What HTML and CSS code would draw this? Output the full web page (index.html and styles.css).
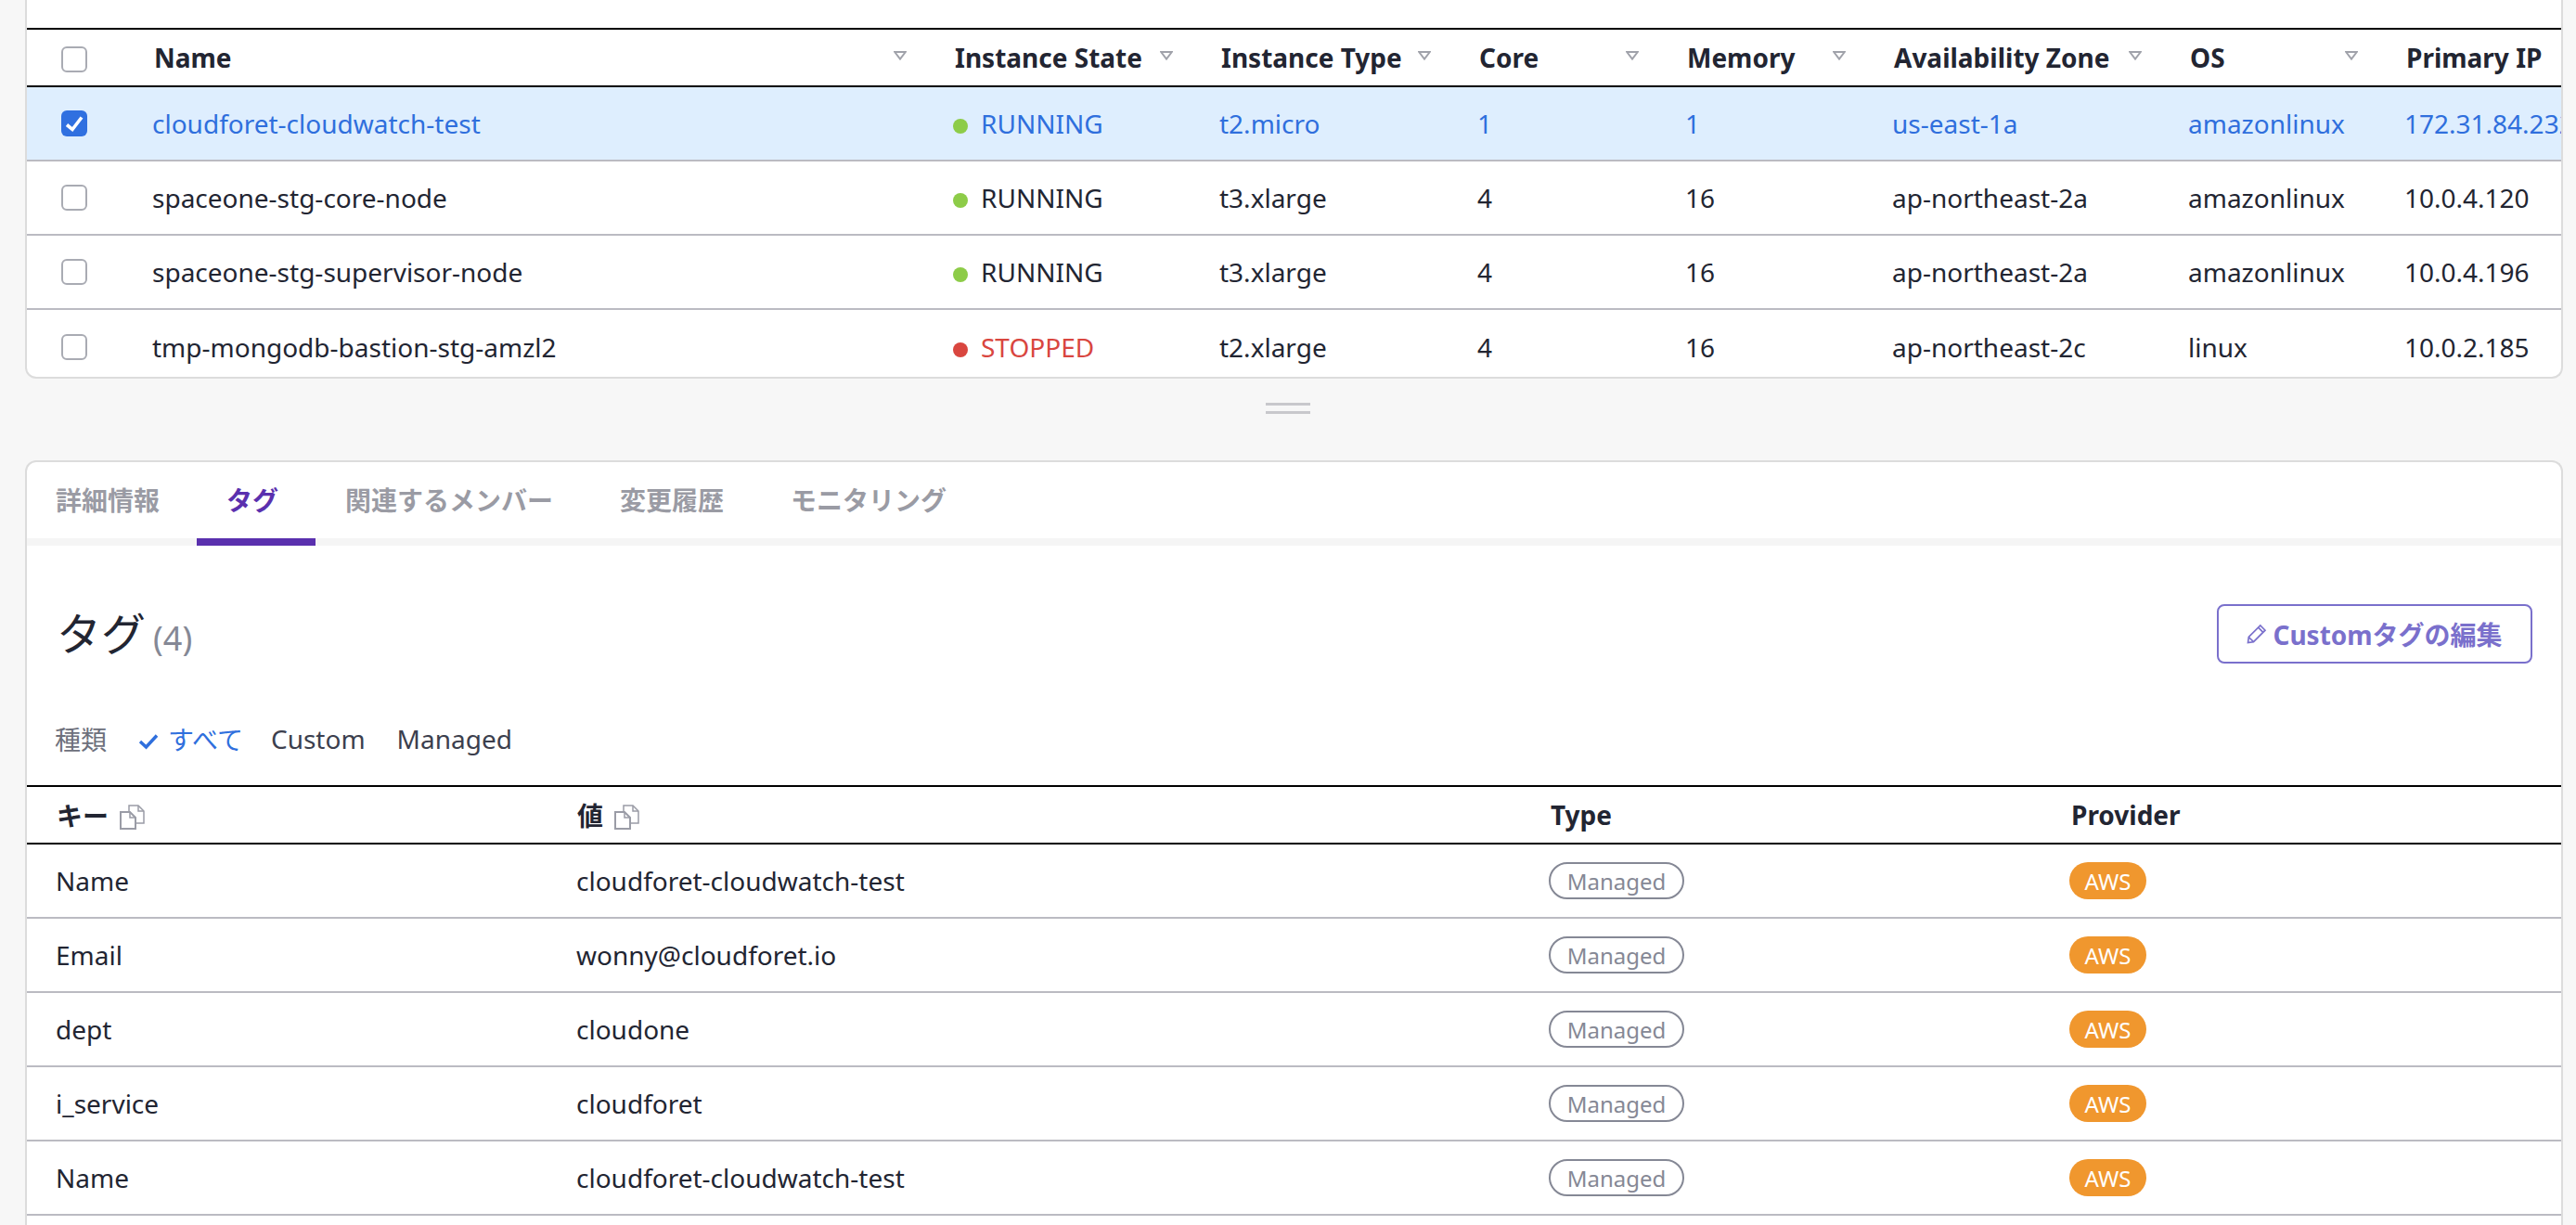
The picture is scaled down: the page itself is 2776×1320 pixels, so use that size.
FILE: index.html
```html
<!DOCTYPE html>
<html lang="ja">
<head>
   <meta charset="UTF-8">
   <title>Cloud Service</title>
   <link rel="stylesheet" href="styles.css">
</head>
<body>
<svg class="defs" width="0" height="0">
   <symbol id="sort" viewBox="0 0 14 10">
      <path d="M1.2 1h11.6L7 8.6z" fill="none" stroke="currentColor" stroke-width="2"/>
   </symbol>
   <symbol id="copy" viewBox="0 0 27 27">
      <path d="M10 7V1h10l6 6v13h-8" fill="none" stroke="currentColor" stroke-width="1.5"/>
      <path d="M20 1v6h6" fill="none" stroke="currentColor" stroke-width="1.5"/>
      <path d="M1 8h10l6 6v12H1z" fill="none" stroke="currentColor" stroke-width="2"/>
      <path d="M11 8v6h6" fill="none" stroke="currentColor" stroke-width="1.5"/>
   </symbol>
</svg>

<section class="card top-card">
   <table class="grid servers">
      <colgroup>
         <col class="c-check"><col class="c-name"><col class="c-state"><col class="c-type"><col class="c-core"><col class="c-mem"><col class="c-zone"><col class="c-os"><col class="c-ip">
      </colgroup>
      <thead>
         <tr>
            <th><span class="box"></span></th>
            <th><div class="head">Name<svg class="sort"><use href="#sort"/></svg></div></th>
            <th><div class="head">Instance State<svg class="sort"><use href="#sort"/></svg></div></th>
            <th><div class="head">Instance Type<svg class="sort"><use href="#sort"/></svg></div></th>
            <th><div class="head">Core<svg class="sort"><use href="#sort"/></svg></div></th>
            <th><div class="head">Memory<svg class="sort"><use href="#sort"/></svg></div></th>
            <th><div class="head">Availability Zone<svg class="sort"><use href="#sort"/></svg></div></th>
            <th><div class="head">OS<svg class="sort"><use href="#sort"/></svg></div></th>
            <th>Primary IP</th>
         </tr>
      </thead>
      <tbody>
         <tr class="selected">
            <td><span class="box checked"><svg viewBox="0 0 28 28"><path d="M6 15.5l6 5L22 7.5" fill="none" stroke="#fff" stroke-width="3.6"/></svg></span></td>
            <td>cloudforet-cloudwatch-test</td>
            <td><i class="dot green"></i>RUNNING</td>
            <td>t2.micro</td>
            <td>1</td>
            <td>1</td>
            <td>us-east-1a</td>
            <td>amazonlinux</td>
            <td>172.31.84.232</td>
         </tr>
         <tr>
            <td><span class="box"></span></td>
            <td>spaceone-stg-core-node</td>
            <td><i class="dot green"></i>RUNNING</td>
            <td>t3.xlarge</td>
            <td>4</td>
            <td>16</td>
            <td>ap-northeast-2a</td>
            <td>amazonlinux</td>
            <td>10.0.4.120</td>
         </tr>
         <tr>
            <td><span class="box"></span></td>
            <td>spaceone-stg-supervisor-node</td>
            <td><i class="dot green"></i>RUNNING</td>
            <td>t3.xlarge</td>
            <td>4</td>
            <td>16</td>
            <td>ap-northeast-2a</td>
            <td>amazonlinux</td>
            <td>10.0.4.196</td>
         </tr>
         <tr class="last">
            <td><span class="box"></span></td>
            <td>tmp-mongodb-bastion-stg-amzl2</td>
            <td class="stopped"><i class="dot red"></i>STOPPED</td>
            <td>t2.xlarge</td>
            <td>4</td>
            <td>16</td>
            <td>ap-northeast-2c</td>
            <td>linux</td>
            <td>10.0.2.185</td>
         </tr>
      </tbody>
   </table>
</section>

<div class="splitter"><span></span></div>

<section class="card detail-card">
   <nav class="tabs">
      <a class="tab">詳細情報</a>
      <a class="tab active">タグ</a>
      <a class="tab">関連するメンバー</a>
      <a class="tab">変更履歴</a>
      <a class="tab">モニタリング</a>
   </nav>

   <div class="title-row">
      <h2>タグ<small>(4)</small></h2>
      <button class="edit-btn">
         <svg viewBox="0 0 22 22"><path d="M1.5 20.5l.8-6L14.8 2l5.2 5.2L7.5 19.7zM12.6 4.2l5.2 5.2M2.3 14.5l5.2 5.2" fill="none" stroke="currentColor" stroke-width="1.7"/></svg>
         Customタグの編集
      </button>
   </div>

   <div class="filters">
      <span class="filter-label">種類</span>
      <span class="filter on"><svg viewBox="0 0 22 18"><path d="M2 9l6.5 6L20 2.5" fill="none" stroke="currentColor" stroke-width="3.4"/></svg>すべて</span>
      <span class="filter">Custom</span>
      <span class="filter managed-filter">Managed</span>
   </div>

   <table class="grid tags">
      <colgroup>
         <col class="t-key"><col class="t-val"><col class="t-type"><col class="t-prov">
      </colgroup>
      <thead>
         <tr>
            <th>キー<svg class="copy"><use href="#copy"/></svg></th>
            <th>値<svg class="copy"><use href="#copy"/></svg></th>
            <th>Type</th>
            <th>Provider</th>
         </tr>
      </thead>
      <tbody>
         <tr><td>Name</td><td>cloudforet-cloudwatch-test</td><td><span class="badge managed">Managed</span></td><td><span class="badge aws">AWS</span></td></tr>
         <tr><td>Email</td><td>wonny@cloudforet.io</td><td><span class="badge managed">Managed</span></td><td><span class="badge aws">AWS</span></td></tr>
         <tr><td>dept</td><td>cloudone</td><td><span class="badge managed">Managed</span></td><td><span class="badge aws">AWS</span></td></tr>
         <tr><td>i_service</td><td>cloudforet</td><td><span class="badge managed">Managed</span></td><td><span class="badge aws">AWS</span></td></tr>
         <tr><td>Name</td><td>cloudforet-cloudwatch-test</td><td><span class="badge managed">Managed</span></td><td><span class="badge aws">AWS</span></td></tr>
      </tbody>
   </table>
</section>
</body>
</html>
```

FILE: styles.css
```css
* {
   box-sizing: border-box;
}

html, body {
   height: 1320px;
   overflow: hidden;
}

body {
   margin: 0;
   padding: 0 14px 0 27px;
   background: #f7f7f7;
   color: #222532;
   font-family: "Noto Sans", "Noto Sans CJK JP", sans-serif;
   font-size: 28px;
}

.defs {
   position: absolute;
}

.card {
   background: #fff;
   border: 2px solid #dcdcdc;
   border-radius: 12px;
   overflow: hidden;
}

.top-card {
   height: 408px;
   padding-top: 30px;
   border-top: none;
   border-radius: 0 0 12px 12px;
}

.splitter {
   height: 88px;
   padding-top: 26px;
}

.splitter span {
   display: block;
   width: 48px;
   height: 12px;
   margin-left: 1337px;
   border-top: 3px solid #c8c8cc;
   border-bottom: 3px solid #c8c8cc;
}

.detail-card {
   height: 824px;
   border-bottom: none;
   border-radius: 12px 12px 0 0;
}

/* tables */
.grid {
   width: 100%;
   border-collapse: collapse;
   table-layout: fixed;
}

.grid th {
   height: 62px;
   padding: 0 0 0 14px;
   border-top: 2px solid #000;
   border-bottom: 2px solid #000;
   font-weight: 700;
   text-align: left;
   white-space: nowrap;
}

.grid td {
   height: 80px;
   padding: 0 0 0 12px;
   border-bottom: 2px solid #bbbbc2;
   white-space: nowrap;
   overflow: hidden;
}

.c-check { width: 123px; }
.c-name { width: 863px; }
.c-state { width: 287px; }
.c-type { width: 278px; }
.c-core { width: 224px; }
.c-mem { width: 223px; }
.c-zone { width: 319px; }
.c-os { width: 233px; }

.servers th:first-child,
.servers td:first-child {
   padding-left: 37px;
}

.servers th .box {
   margin-top: 4px;
}

.head {
   position: relative;
}

.sort {
   position: absolute;
   right: 38px;
   top: 12px;
   width: 14px;
   height: 10px;
   color: #a0a2aa;
}

.selected td {
   background: #deeefe;
   color: #2f6fdd;
}

.last td {
   border-bottom: none;
}

.stopped {
   color: #d9463f;
}

.box {
   display: block;
   width: 28px;
   height: 28px;
   border: 2px solid #a9abb3;
   border-radius: 6px;
   background: #fff;
}

.box.checked {
   border: none;
   background: #3070e0;
}

.box svg {
   display: block;
   width: 28px;
   height: 28px;
}

.dot {
   display: inline-block;
   width: 16px;
   height: 16px;
   margin-right: 14px;
   border-radius: 50%;
}

.green { background: #8dcc48; }
.red { background: #d9463f; }

/* tabs */
.tabs {
   display: flex;
   height: 90px;
   border-bottom: 8px solid #f5f5f5;
}

.tab {
   height: 90px;
   padding: 23px 40px 0 32px;
   color: #9a9ba4;
   font-weight: 700;
   line-height: 36px;
}

.tab:first-child {
   padding-left: 31px;
}

.active {
   border-bottom: 8px solid #5a30ae;
   color: #5a30ae;
}

.title-row {
   display: flex;
   align-items: center;
   justify-content: space-between;
   height: 160px;
   margin-top: 15px;
   padding: 0 31px 0 32px;
}

h2 {
   margin: 0;
   padding-bottom: 6px;
   font-size: 48px;
   font-weight: 400;
}

h2 small {
   margin-left: 8px;
   color: #858895;
   font-size: 36px;
}

.edit-btn {
   display: flex;
   align-items: center;
   justify-content: center;
   gap: 6px;
   width: 340px;
   height: 64px;
   padding: 0;
   border: 2px solid #7a70cc;
   border-radius: 8px;
   background: #fff;
   color: #7a70cc;
   font: 700 28px "Noto Sans", "Noto Sans CJK JP", sans-serif;
}

.edit-btn svg {
   width: 22px;
   height: 22px;
}

.filters {
   display: flex;
   align-items: center;
   gap: 32px;
   height: 83px;
   padding: 0 0 18px 30px;
   color: #3c3f4e;
}

.filter-label {
   margin-right: 2px;
   color: #6d707c;
}

.filter.on {
   margin-right: -2px;
   color: #2f6fdd;
}

.filter.on svg {
   width: 22px;
   height: 18px;
   margin-right: 10px;
}

.managed-filter {
   margin-left: 2px;
}

.tags td {
   padding-left: 31px;
}

.tags th {
   padding-left: 32px;
}

.tags th:nth-child(n+3) {
   padding-left: 33px;
}

.t-key { width: 561px; }
.t-val { width: 1048px; }
.t-type { width: 561px; }

.copy {
   width: 27px;
   height: 27px;
   margin-left: 12px;
   vertical-align: -4px;
   color: #9a9ca6;
}

.badge {
   display: inline-flex;
   align-items: center;
   justify-content: center;
   height: 40px;
   border-radius: 20px;
   font-size: 24px;
}

.managed {
   width: 146px;
   border: 2px solid #858895;
   color: #858895;
}

.aws {
   width: 83px;
   background: #f0972e;
   color: #fff;
}
```
